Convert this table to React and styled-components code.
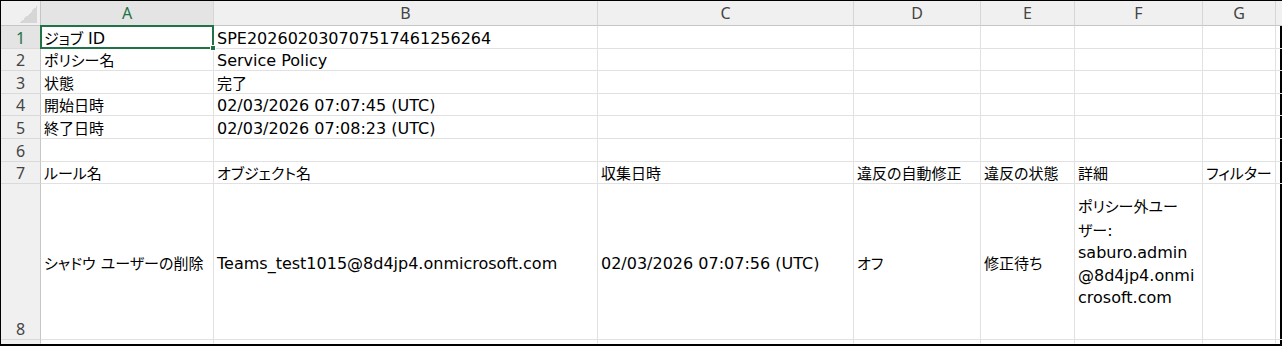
import React from 'react'
import styled, { createGlobalStyle } from 'styled-components'

const GREEN = '#217346'
const GRID = '#e1e1e1'
const HEAD_LINE = '#c6c6c6'

const GlobalStyle = createGlobalStyle`
  html, body { margin: 0; padding: 0; background: #fff; }
  body { font-family: "DejaVu Sans", "Noto Sans CJK JP", sans-serif; }
`

const Sheet = styled.div`
  display: grid;
  grid-template-columns: 40px 173px 384px 256px 127px 94px 128px 73px 1fr;
  grid-template-rows: 25px 23px 22px 23px 22px 23px 23px 22px 156px 1fr;
  width: 1282px;
  height: 346px;
  box-sizing: border-box;
  border: 1px solid #000;
  border-right-width: 2px;
  border-bottom-width: 2px;
  background: #fff;
  color: #000;
`

const Corner = styled.div`
  background: #f0f0f0;
  border-right: 1px solid ${HEAD_LINE};
  border-bottom: 1px solid ${HEAD_LINE};
  display: flex;
  align-items: flex-end;
  justify-content: flex-end;
  padding: 0 3px 2px 0;
  box-sizing: border-box;
  &::before {
    content: '';
    width: 17px;
    height: 17px;
    background: linear-gradient(to bottom right, transparent 50%, #d6d6d6 50%);
  }
`

const ColHead = styled.div`
  background: ${p => (p.$active ? '#e4e4e4' : '#f0f0f0')};
  color: ${p => (p.$active ? GREEN : '#444')};
  border-right: 1px solid ${p => (p.$last ? 'transparent' : '#d6d6d6')};
  border-bottom: 1px solid ${HEAD_LINE};
  display: flex;
  align-items: center;
  justify-content: center;
  font-family: "Noto Sans", sans-serif;
  font-size: 16px;
  box-sizing: border-box;
`

const RowHead = styled.div`
  background: ${p => (p.$active ? '#e4e4e4' : '#f0f0f0')};
  color: ${p => (p.$active ? GREEN : '#444')};
  border-right: 1px solid ${HEAD_LINE};
  border-bottom: 1px solid ${p => (p.$last ? 'transparent' : '#dadada')};
  display: flex;
  align-items: flex-end;
  justify-content: center;
  font-family: "Noto Sans", sans-serif;
  font-size: 16px;
  line-height: 20px;
  box-sizing: border-box;
`

const Cell = styled.div`
  position: relative;
  border-right: 1px solid ${p => (p.$last ? 'transparent' : GRID)};
  border-bottom: 1px solid ${p => (p.$filler ? 'transparent' : GRID)};
  display: flex;
  align-items: ${p => (p.$middle ? 'center' : 'flex-end')};
  padding: ${p => (p.$middle ? '4px 3px 0' : '0 3px')};
  font-size: 16px;
  line-height: 18px;
  white-space: nowrap;
  overflow: ${p => (p.$selected ? 'visible' : 'hidden')};
  box-sizing: border-box;
`

const Value = styled.span`
  white-space: pre;
`

const Lines = styled.div`
  display: flex;
  flex-direction: column;
  line-height: 22.5px;
  padding-bottom: 22px;
`

const Jp = styled.span`
  font-family: "Noto Sans CJK JP", sans-serif;
  font-size: 15px;
  font-feature-settings: "palt" 1;
`

const Selection = styled.span`
  position: absolute;
  left: -1px;
  top: -1px;
  right: -1px;
  bottom: -1px;
  border: 2px solid ${GREEN};
  z-index: 2;
  pointer-events: none;
  &::after {
    content: '';
    position: absolute;
    right: -4px;
    bottom: -4px;
    width: 6px;
    height: 6px;
    box-sizing: border-box;
    background: ${GREEN};
    border: 1px solid #fff;
  }
`

const JP_RUN = /([\u3000-\u30ff\u4e00-\u9fff\uff00-\uffef]+)/

// split mixed strings so Japanese runs get the CJK font
function text(str) {
  if (!str) return null
  return (
    <Value>
      {str.split(JP_RUN).map((part, i) =>
        i % 2 === 1 ? <Jp key={i}>{part}</Jp> : part
      )}
    </Value>
  )
}

const columns = ['A', 'B', 'C', 'D', 'E', 'F', 'G']

const rows = [
  { n: 1, cells: ['ジョブ ID', 'SPE202602030707517461256264'] },
  { n: 2, cells: ['ポリシー名', 'Service Policy'] },
  { n: 3, cells: ['状態', '完了'] },
  { n: 4, cells: ['開始日時', '02/03/2026 07:07:45 (UTC)'] },
  { n: 5, cells: ['終了日時', '02/03/2026 07:08:23 (UTC)'] },
  { n: 6, cells: [] },
  { n: 7, cells: ['ルール名', 'オブジェクト名', '収集日時', '違反の自動修正', '違反の状態', '詳細', 'フィルター'] },
  {
    n: 8,
    tall: true,
    cells: [
      'シャドウ ユーザーの削除',
      'Teams_test1015@8d4jp4.onmicrosoft.com',
      '02/03/2026 07:07:56 (UTC)',
      'オフ',
      '修正待ち',
      ['ポリシー外ユー', 'ザー:', 'saburo.admin', '@8d4jp4.onmi', 'crosoft.com'],
      '',
    ],
  },
]

function App() {
  return (
    <>
      <GlobalStyle />
      <Sheet>
        <Corner />
        {columns.map(c => (
          <ColHead key={c} $active={c === 'A'}>{c}</ColHead>
        ))}
        <ColHead $last />

        {rows.map(row => (
          <React.Fragment key={row.n}>
            <RowHead $active={row.n === 1}>{row.n}</RowHead>
            {columns.map((c, i) => {
              const value = row.cells[i]
              const selected = row.n === 1 && i === 0
              return (
                <Cell key={c} $middle={row.tall} $selected={selected}>
                  {Array.isArray(value) ? (
                    <Lines>
                      {value.map(line => <span key={line}>{text(line)}</span>)}
                    </Lines>
                  ) : (
                    text(value)
                  )}
                  {selected && <Selection />}
                </Cell>
              )
            })}
            <Cell $last />
          </React.Fragment>
        ))}

        <RowHead $last />
        {columns.map(c => <Cell key={c} $filler />)}
        <Cell $filler $last />
      </Sheet>
    </>
  )
}

export default App
